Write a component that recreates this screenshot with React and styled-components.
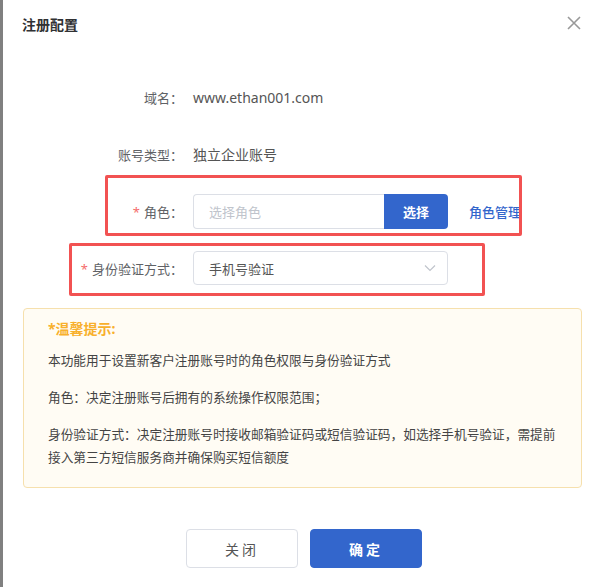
import React from 'react';
import styled, { createGlobalStyle } from 'styled-components';

const GlobalStyle = createGlobalStyle`
    html, body {
        margin: 0;
        padding: 0;
        background: #fff;
    }
    body {
        font-family: "Noto Sans", "Noto Sans CJK SC", sans-serif;
    }
`;

const Page = styled.div`
    display: flex;
    width: 602px;
    height: 587px;
    overflow: hidden;
`;

const Strip = styled.div`
    width: 3px;
    flex-shrink: 0;
    background-color: #808080;
`;

const Dialog = styled.div`
    position: relative;
    flex: 1;
    display: flex;
    flex-direction: column;
    background-color: #fff;
`;

const Header = styled.div`
    display: flex;
    align-items: center;
    justify-content: space-between;
    height: 52px;
    padding: 0 20px 0 19px;
    box-sizing: border-box;
`;

const Title = styled.div`
    font-size: 14px;
    font-weight: 700;
    color: #303133;
    line-height: 20px;
    margin-top: -2px;
`;

const Close = styled.div`
    display: flex;
    width: 16px;
    height: 16px;
    margin-top: -6px;
    cursor: pointer;
`;

const Form = styled.div`
    display: flex;
    flex-direction: column;
    gap: 21px;
    padding-top: 27px;
`;

const Row = styled.div`
    display: flex;
    align-items: center;
    height: 36px;
`;

const Label = styled.div`
    width: 110px;
    margin-left: 70px;
    margin-right: 10px;
    text-align: right;
    font-size: 13px;
    color: #606266;
    white-space: nowrap;
`;

const Star = styled.span`
    color: #f56c6c;
    margin-right: 4px;
`;

const Value = styled.div`
    font-size: 14px;
    color: #555;
`;

const InputGroup = styled.div`
    display: flex;
    height: 35px;
`;

const Input = styled.div`
    width: 191px;
    box-sizing: border-box;
    border: 1px solid #dcdfe6;
    border-right: none;
    border-radius: 4px 0 0 4px;
    padding-left: 15px;
    display: flex;
    align-items: center;
    font-size: 13px;
    color: #c0c4cc;
`;

const PickButton = styled.button`
    width: 64px;
    border: none;
    border-radius: 0 4px 4px 0;
    background-color: #3366cc;
    color: #fff;
    font-family: inherit;
    font-size: 13px;
    font-weight: 700;
    cursor: pointer;
`;

const Manage = styled.a`
    margin-left: 21px;
    font-size: 13px;
    font-weight: 500;
    color: #3366cc;
    cursor: pointer;
`;

const Select = styled.div`
    width: 255px;
    height: 34px;
    box-sizing: border-box;
    border: 1px solid #dcdfe6;
    border-radius: 4px;
    padding: 0 11px 0 15px;
    display: flex;
    align-items: center;
    justify-content: space-between;
    font-size: 13px;
    color: #555;
`;

const Mark = styled.div`
    position: absolute;
    box-sizing: border-box;
    border: 3px solid #f25252;
    border-radius: 2px;
    pointer-events: none;
`;

const Tip = styled.div`
    margin: 22px 20px 0 20px;
    padding: 10px 20px 18px 24px;
    border: 1px solid #f6e0ad;
    border-radius: 4px;
    background-color: #fffcf4;
`;

const TipTitle = styled.div`
    font-size: 14px;
    font-weight: 700;
    line-height: 20px;
    color: #f8b02c;
`;

const TipText = styled.p`
    margin: ${({ first }) => (first ? '10px' : '14px')} 0 0 0;
    font-size: 12.7px;
    line-height: 23px;
    color: #444;
`;

const Footer = styled.div`
    display: flex;
    justify-content: center;
    gap: 12px;
    margin-top: 41px;
    padding-left: 3px;
`;

const FooterButton = styled.button`
    width: 112px;
    height: 39px;
    box-sizing: border-box;
    border-radius: 4px;
    border: 1px solid ${({ primary }) => (primary ? '#3366cc' : '#dcdfe6')};
    background-color: ${({ primary }) => (primary ? '#3366cc' : '#fff')};
    color: ${({ primary }) => (primary ? '#fff' : '#555')};
    font-family: inherit;
    font-size: 14px;
    font-weight: ${({ primary }) => (primary ? 700 : 400)};
    letter-spacing: 3px;
    cursor: pointer;
`;

const CloseIcon = () => (
    <svg width="16" height="16" viewBox="0 0 16 16">
        <path d="M2 2 L14 14 M14 2 L2 14" stroke="#999" strokeWidth="1.6" fill="none" />
    </svg>
);

const Chevron = () => (
    <svg width="12" height="8" viewBox="0 0 12 8">
        <polyline points="1,1.5 6,6.5 11,1.5" stroke="#c0c4cc" strokeWidth="1.2" fill="none" />
    </svg>
);

export default function App() {
    return (
        <Page>
            <GlobalStyle />
            <Strip />
            <Dialog>
                <Header>
                    <Title>注册配置</Title>
                    <Close><CloseIcon /></Close>
                </Header>
                <Form>
                    <Row>
                        <Label>域名：</Label>
                        <Value>www.ethan001.com</Value>
                    </Row>
                    <Row>
                        <Label>账号类型：</Label>
                        <Value>独立企业账号</Value>
                    </Row>
                    <Row>
                        <Label><Star>*</Star>角色：</Label>
                        <InputGroup>
                            <Input>选择角色</Input>
                            <PickButton>选择</PickButton>
                        </InputGroup>
                        <Manage>角色管理</Manage>
                    </Row>
                    <Row>
                        <Label><Star>*</Star>身份验证方式：</Label>
                        <Select>
                            手机号验证
                            <Chevron />
                        </Select>
                    </Row>
                </Form>
                <Tip>
                    <TipTitle>*温馨提示:</TipTitle>
                    <TipText first>本功能用于设置新客户注册账号时的角色权限与身份验证方式</TipText>
                    <TipText>角色：决定注册账号后拥有的系统操作权限范围；</TipText>
                    <TipText>身份验证方式：决定注册账号时接收邮箱验证码或短信验证码，如选择手机号验证，需提前接入第三方短信服务商并确保购买短信额度</TipText>
                </Tip>
                <Footer>
                    <FooterButton>关闭</FooterButton>
                    <FooterButton primary>确定</FooterButton>
                </Footer>
                <Mark style={{ left: 102, top: 175, width: 417, height: 61 }} />
                <Mark style={{ left: 66, top: 243, width: 416, height: 53 }} />
            </Dialog>
        </Page>
    );
}
